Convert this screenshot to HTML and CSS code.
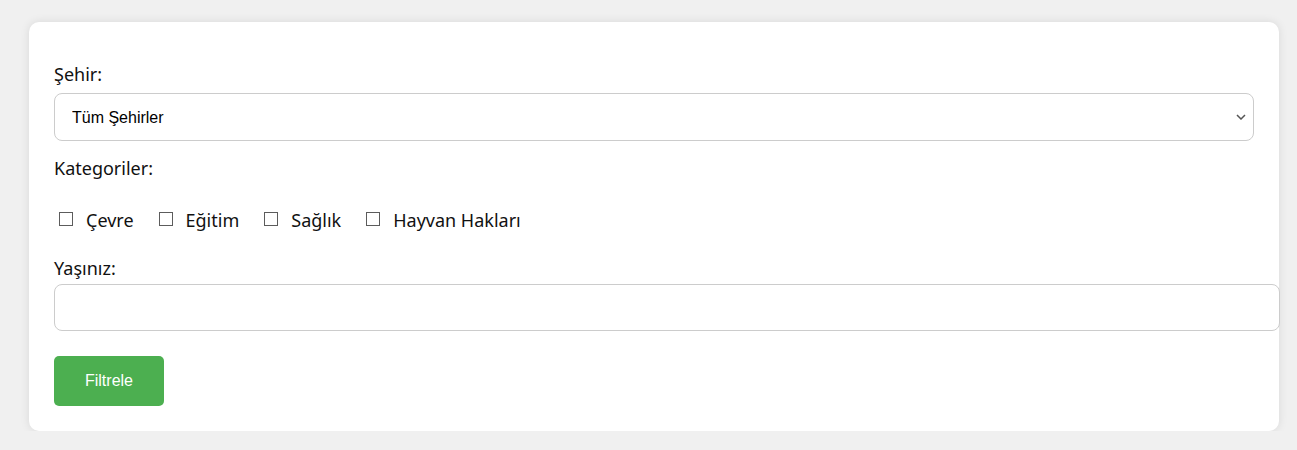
FILE: index.html
```html
<!DOCTYPE html>
<html lang="tr">
<head>
<meta charset="utf-8">
<title>Filtre</title>
<link rel="stylesheet" href="styles.css">
</head>
<body>
<div class="page">
  <form class="card">
    <label class="field-label" for="city">Şehir:</label>
    <div class="select-wrap">
      <select id="city" class="select">
        <option>Tüm Şehirler</option>
      </select>
      <svg class="chevron" width="10" height="6" viewBox="0 0 10 6"><path d="M1 1 L5 5 L9 1" fill="none" stroke="#555" stroke-width="1.5"/></svg>
    </div>
    <label class="field-label">Kategoriler:</label>
    <div class="checks">
      <label class="check"><input type="checkbox" class="box"><span>Çevre</span></label>
      <label class="check"><input type="checkbox" class="box"><span>Eğitim</span></label>
      <label class="check"><input type="checkbox" class="box"><span>Sağlık</span></label>
      <label class="check"><input type="checkbox" class="box"><span>Hayvan Hakları</span></label>
    </div>
    <label class="field-label field-label--age" for="age">Yaşınız:</label>
    <input id="age" type="text" class="text-input">
    <button type="button" class="btn">Filtrele</button>
  </form>
</div>
</body>
</html>
```
FILE: styles.css
```css
html, body {
  margin: 0;
  padding: 0;
  background: #f0f0f0;
}
.page {
  padding: 22px 0 0 29px;
}
.card {
  width: 1200px;
  padding: 25px;
  background: #fff;
  border-radius: 10px;
  box-shadow: 0 0 10px rgba(0, 0, 0, 0.1);
  display: flex;
  flex-direction: column;
  align-items: flex-start;
  font-family: "Noto Sans", "Open Sans", sans-serif;
  color: #111;
}
.field-label {
  display: block;
  font-size: 18px;
  line-height: 25px;
  margin: 15px 0 6px;
}
.field-label--age {
  margin: 23px 0 3px;
}
.select-wrap {
  position: relative;
  width: 1200px;
}
.select {
  appearance: none;
  -webkit-appearance: none;
  width: 100%;
  height: 48px;
  box-sizing: border-box;
  padding: 0 17px;
  border: 1px solid #ccc;
  border-radius: 8px;
  background: #fff;
  font-family: "Liberation Sans", Arial, sans-serif;
  font-size: 16px;
  color: #000;
}
.chevron {
  position: absolute;
  right: 8px;
  top: 21px;
}
.checks {
  display: flex;
  align-items: center;
  margin-top: 20px;
  padding-left: 5px;
}
.check {
  display: flex;
  align-items: center;
  font-size: 18px;
  line-height: 26px;
  margin-right: 25px;
}
.box {
  appearance: none;
  -webkit-appearance: none;
  width: 14px;
  height: 14px;
  margin: 0 13px 0 0;
  border: 1px solid #5c5c5c;
  background: #fff;
  box-sizing: border-box;
  position: relative;
  top: -1px;
}
.text-input {
  width: 1200px;
  box-sizing: content-box;
  height: 21px;
  padding: 12px;
  border: 1px solid #ccc;
  border-radius: 8px;
  font-family: "Liberation Sans", Arial, sans-serif;
  font-size: 16px;
  margin: 0;
}
.btn {
  margin-top: 25px;
  width: 110px;
  height: 50px;
  background: #4caf50;
  color: #fff;
  border: none;
  border-radius: 5px;
  font-family: "Liberation Sans", Arial, sans-serif;
  font-size: 16px;
}
```
